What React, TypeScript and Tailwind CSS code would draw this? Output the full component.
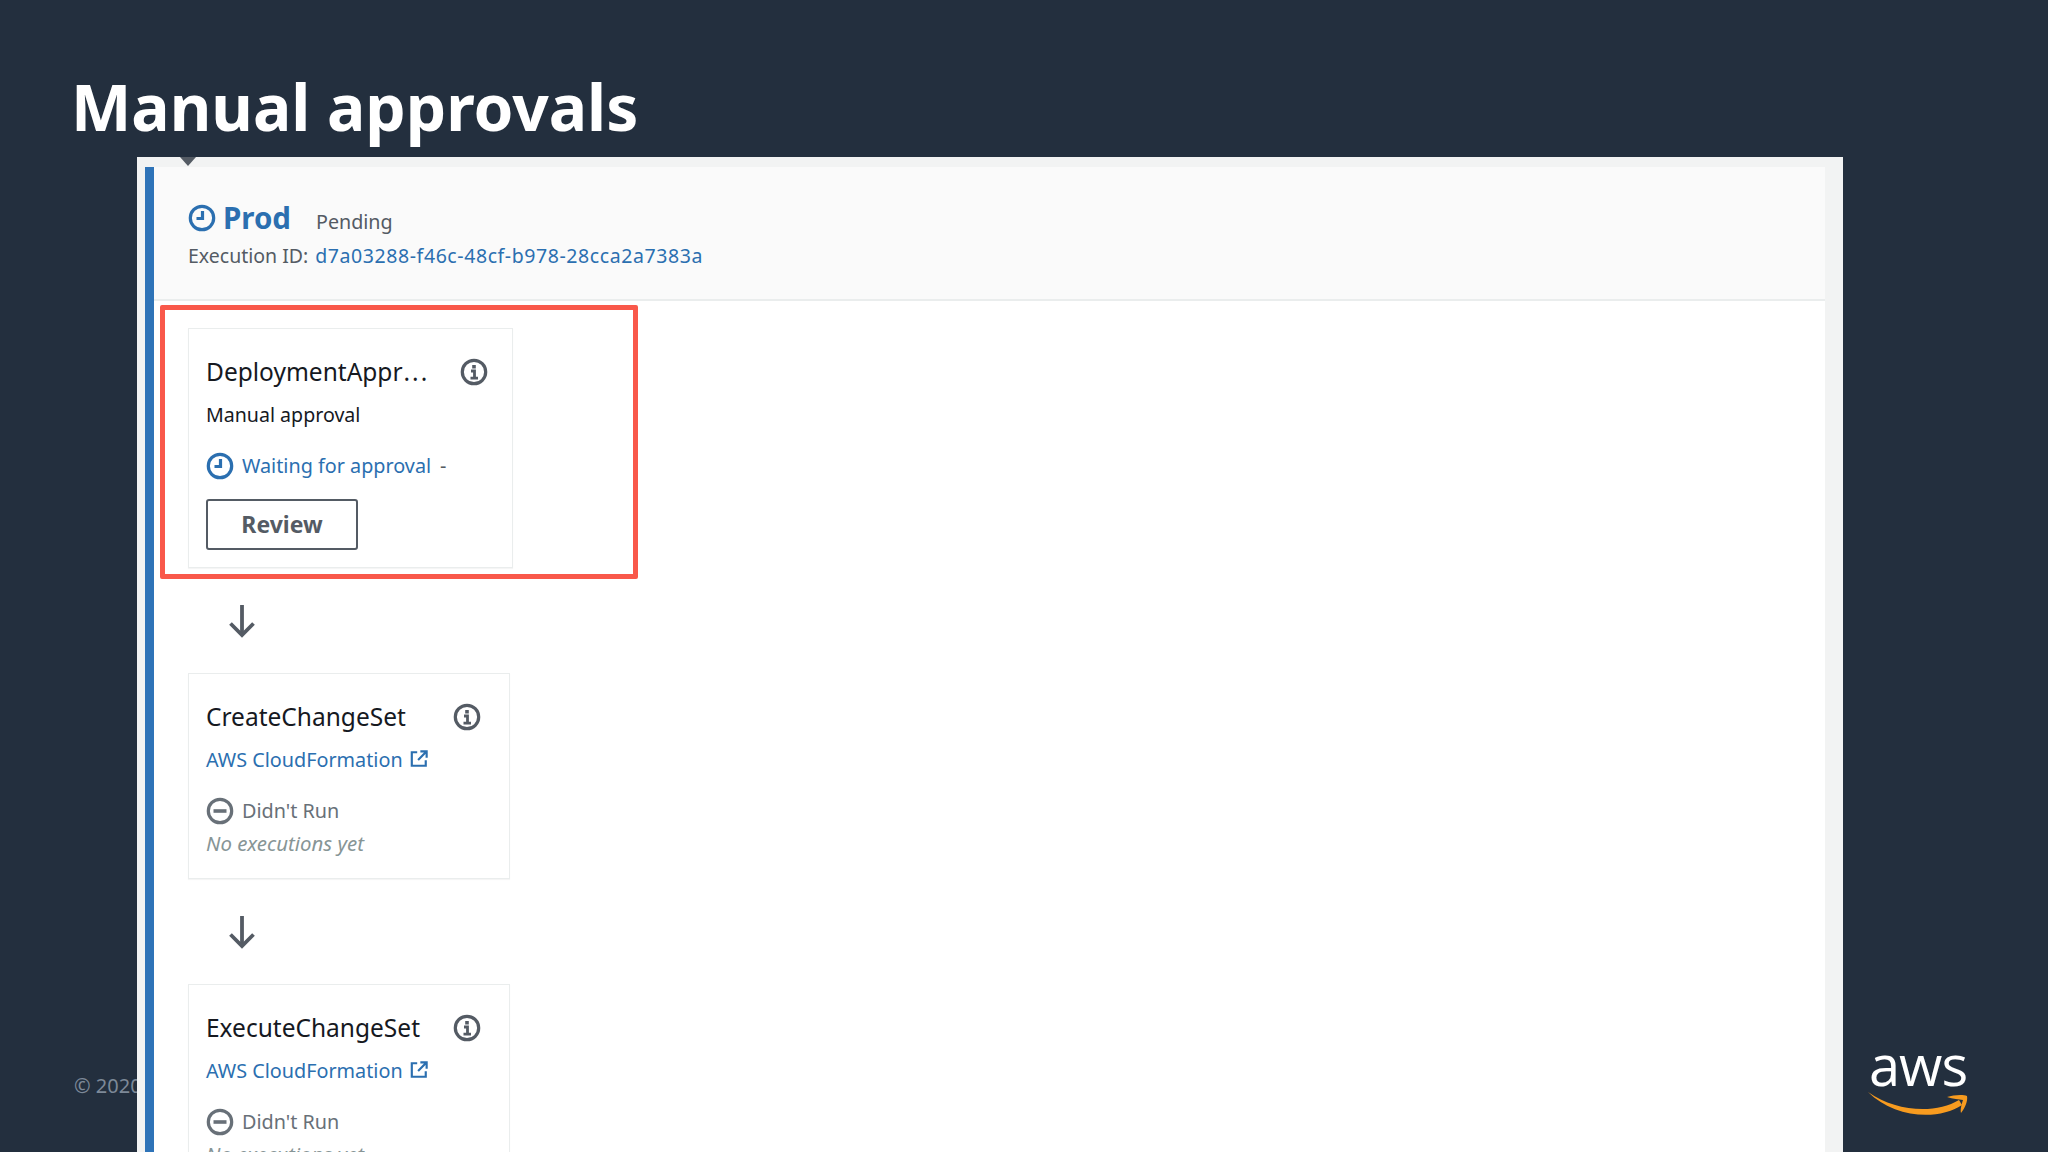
const font = "font-['Noto_Sans',sans-serif]"

function ClockIcon({ className }: { className: string }) {
  return (
    <svg viewBox="0 0 28 28" className={className} fill="none" stroke="currentColor">
      <circle cx="14" cy="14" r="11.7" strokeWidth="3.2" />
      <path d="M14.5 7v7.5H8.5" strokeWidth="3.2" />
    </svg>
  )
}

function InfoIcon() {
  return (
    <svg viewBox="0 0 28 28" className="h-[28px] w-[28px] text-[#545b64]" fill="none" stroke="currentColor">
      <circle cx="14" cy="14" r="11.7" strokeWidth="3.2" />
      <path d="M14 7v3.5" strokeWidth="3.6" />
      <path d="M11 13h3.5v7M10.5 20.2h7.5" strokeWidth="2.8" />
    </svg>
  )
}

function SkippedIcon() {
  return (
    <svg viewBox="0 0 28 28" className="h-[28px] w-[28px] text-[#687078]" fill="none" stroke="currentColor">
      <circle cx="14" cy="14" r="11.7" strokeWidth="3.2" />
      <path d="M7.5 14h13" strokeWidth="3.6" />
    </svg>
  )
}

function ExternalIcon() {
  return (
    <svg viewBox="0 0 20 20" className="-mt-[2px] h-[18px] w-[18px]" fill="none" stroke="currentColor" strokeWidth="2.4">
      <path d="M8 2.5H2v15h15.5v-6" />
      <path d="M11.5 1.5h7v7M18 2l-9 9" />
    </svg>
  )
}

function ArrowDownIcon() {
  return (
    <svg viewBox="0 0 26 34" className="h-[34px] w-[26px] text-[#545b64]" fill="none" stroke="currentColor" strokeWidth="3.8">
      <path d="M13 1v30" />
      <path d="M1.5 19.5 13 31l11.5-11.5" />
    </svg>
  )
}

function AwsLogo() {
  return (
    <div className="absolute left-[1868px] top-[1035px] flex w-[100px] flex-col items-center">
      <span className="font-['Open_Sans',sans-serif] text-[56px] leading-[58px] tracking-[-1px] text-white">aws</span>
      <svg viewBox="0 0 100 24" className="-mt-[2px] h-[24px] w-[100px]">
        <path d="M0 1C28 21 68 23 91 9L94 14C70 30 26 27 0 1Z" fill="#f79b1f" />
        <path d="M79 6c6-2 16-3 20-1 1 5-2 12-6 17-1-4 1-10 2-13-4-1-10-1-16-3Z" fill="#f79b1f" />
      </svg>
    </div>
  )
}

function ActionCard({ name, width, inset, children }: { name: React.ReactNode; width: string; inset: string; children: React.ReactNode }) {
  return (
    <div className={`${width} border border-[#eaeded] bg-white px-[17px] pt-[25px] shadow-[0_1px_1px_rgba(0,0,0,0.04)]`}>
      <div className={`${inset} flex h-[36px] items-center justify-between`}>
        <span className="text-[24.5px] leading-[36px] text-[#16191f]">{name}</span>
        <InfoIcon />
      </div>
      {children}
    </div>
  )
}

function CloudFormationAction() {
  return (
    <>
      <div className="mt-[12px] flex h-[26px] items-center gap-[7px] text-[19.8px] text-[#2b6fb0]">
        <span>AWS CloudFormation</span>
        <ExternalIcon />
      </div>
      <div className="mt-[24px] flex h-[28px] items-center gap-[8px] text-[19.8px] text-[#687078]">
        <SkippedIcon />
        <span>Didn't Run</span>
      </div>
      <div className="mt-[4px] pb-[21px] text-[20.4px] leading-[28px] italic text-[#879596]">No executions yet</div>
    </>
  )
}

export default function App() {
  return (
    <div className={`${font} relative h-screen w-full overflow-hidden bg-[#232f3e]`}>
      <h1 className="pl-[71px] pt-[65px] text-[64px] leading-[84px] font-bold text-white">Manual approvals</h1>

      <div className="absolute left-[74px] top-[1074px] text-[20px] leading-[24px] text-[#7d8998]">© 2020</div>
      <AwsLogo />

      <div className="relative ml-[137px] mt-[8px] h-[1000px] w-[1706px] bg-[#f2f3f3] pl-[8px] pr-[18px] pt-[10px]">
        {/* stage arrow */}
        <div className="absolute left-[43px] top-0 h-0 w-0 border-x-[8px] border-t-[9px] border-x-transparent border-t-[#545b64]" />

        <div className="h-full border-l-[9px] border-[#2e73b8] bg-white">
          <div className="h-[134px] border-b-2 border-[#eaeded] bg-[#fafafa] pl-[34px] pt-[27px]">
            <div className="flex h-[48px] items-center">
              <ClockIcon className="h-[28px] w-[28px] text-[#2b6fb0]" />
              <span className="ml-[7px] text-[29.5px] leading-[40px] font-bold text-[#2b6fb0]">Prod</span>
              <span className="ml-[25px] mt-[7px] text-[19.7px] text-[#545b64]">Pending</span>
            </div>
            <div className="flex text-[19.5px] leading-[28px] text-[#545b64]">
              <span>Execution ID:</span>
              <span className="ml-[7px] tracking-[0.58px] text-[#2b6fb0]">d7a03288-f46c-48cf-b978-28cca2a7383a</span>
            </div>
          </div>

          <div className="relative pl-[34px] pt-[27px]">
            {/* red highlight over the first action */}
            <div className="absolute left-[6px] top-[4px] h-[274px] w-[478px] rounded-[2px] border-[5px] border-[#f9584a]" />

            <ActionCard
              name={<>DeploymentAppr<span className="ml-[1px] tracking-[2px]">...</span></>}
              width="w-[325px]"
              inset="pr-[7px]"
            >
              <div className="mt-[11px] text-[19.6px] leading-[28px] text-[#16191f]">Manual approval</div>
              <div className="mt-[21px] flex h-[32px] items-center gap-[8px] text-[19.8px] text-[#2b6fb0]">
                <ClockIcon className="h-[28px] w-[28px]" />
                <span>Waiting for approval</span>
                <span className="ml-[1px] text-[#545b64]">-</span>
              </div>
              <button className="mb-[17px] mt-[17px] block h-[51px] w-[152px] rounded-[3px] border-2 border-[#545b64] bg-white text-[23px] font-bold text-[#545b64]">
                Review
              </button>
            </ActionCard>

            <div className="flex h-[105px] items-center pl-[41px]">
              <ArrowDownIcon />
            </div>

            <ActionCard name="CreateChangeSet" width="w-[322px]" inset="pr-[11px]">
              <CloudFormationAction />
            </ActionCard>

            <div className="flex h-[105px] items-center pl-[41px]">
              <ArrowDownIcon />
            </div>

            <ActionCard name="ExecuteChangeSet" width="w-[322px]" inset="pr-[11px]">
              <CloudFormationAction />
            </ActionCard>
          </div>
        </div>
      </div>
    </div>
  )
}
